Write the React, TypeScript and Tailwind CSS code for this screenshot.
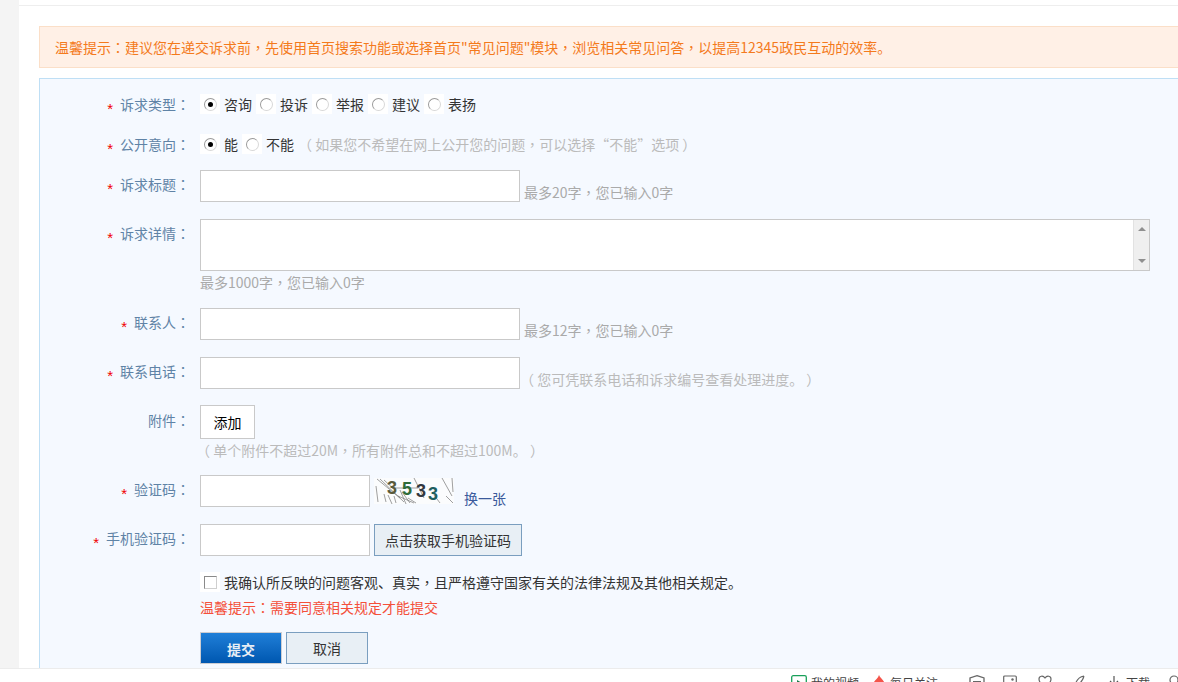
import React from "react";

const font = { fontFamily: '"Noto Sans CJK SC", "Liberation Sans", sans-serif' };

function T({ s }: { s: string }) {
  const parts = s.split(/([：，（）])/);
  return (
    <>
      {parts.map((p, i) =>
        i % 2 === 1 ? (
          <span key={i} className="font-['Noto_Sans_CJK_TC']">{p}</span>
        ) : (
          <React.Fragment key={i}>{p}</React.Fragment>
        )
      )}
    </>
  );
}

function Star() {
  return <span className="mr-[7px] h-[10px] translate-y-[2px] font-['Liberation_Sans'] text-[15px] leading-[16px] text-[#f00000]">*</span>;
}

function Label({ text, required = true, className = "" }: { text: string; required?: boolean; className?: string }) {
  return (
    <div className={`flex w-[160px] shrink-0 items-center justify-end pr-[10px] text-[14px] leading-[20px] text-[#5f83a6] ${className}`}>
      {required && <Star />}
      <span><T s={text + "："} /></span>
    </div>
  );
}

function Radio({ checked, label }: { checked?: boolean; label: string }) {
  return (
    <div className="flex items-center">
      <span className="flex h-[20px] w-[20px] items-center justify-center bg-white">
        <span className="flex h-[13px] w-[13px] items-center justify-center rounded-full border border-[#9a9a9a] border-b-[#d8d8d8] border-r-[#d8d8d8] bg-white">
          {checked && <span className="h-[5px] w-[5px] rounded-full bg-black" />}
        </span>
      </span>
      <span className="ml-[4px] mr-[4px] text-[14px] leading-[20px] text-[#333333]">{label}</span>
    </div>
  );
}

function Input({ w }: { w: string }) {
  return <div className={`h-[32px] shrink-0 border border-[#c9c9c9] bg-white ${w}`} />;
}

function Captcha() {
  return (
    <svg width="80" height="26" viewBox="0 0 80 26" className="block bg-[#fbfcfd]">
      <g stroke="#777" strokeWidth="0.7" fill="none">
        <path d="M3 1 L26 20 M6 1 L30 24 M2 8 L4 24 M10 2 L22 13 M14 17 L18 26 M26 12 L32 26 M28 14 L36 25 M24 18 L40 25 M40 0 L50 20 M68 0 L78 18 M78 0 L79 14 M72 18 L79 25 M60 17 L66 25 M10 16 L12 24 M20 18 L22 25 M18 10 L44 10 M34 20 L42 25" />
      </g>
      <text x="13" y="16" fontFamily="Liberation Sans" fontWeight="700" fontSize="18" fill="#5a5a3a">3</text>
      <text x="28" y="17" fontFamily="Liberation Sans" fontWeight="700" fontSize="18" fill="#2f6b3a">5</text>
      <text x="42" y="19" fontFamily="Liberation Sans" fontWeight="700" fontSize="18" fill="#33383f">3</text>
      <text x="54" y="22" fontFamily="Liberation Sans" fontWeight="700" fontSize="18" fill="#1f5f5f">3</text>
    </svg>
  );
}

function Footer() {
  return (
    <div className="h-[14px] w-full shrink-0 overflow-hidden border-t border-[#ececec] bg-white text-[12px] leading-[20px] text-[#444444]">
      <div className="flex h-[20px] items-start pl-[791px] pt-[6px]">
        <svg width="16" height="16" viewBox="0 0 16 16" className="shrink-0"><rect x="0.7" y="0.7" width="14.6" height="14.6" rx="1.5" fill="none" stroke="#1aa05a" strokeWidth="1.3" /><path d="M6 5 L11 8 L6 11 Z" fill="#1a7a4a" /></svg>
        <span className="ml-[4px] mt-[-2px] w-[62px] shrink-0">我的视频</span>
        <svg width="12" height="14" viewBox="0 0 12 14" className="shrink-0"><path d="M6 0 C7 3 12 6 12 10 C12 13 9 14 6 14 C3 14 0 13 0 10 C0 6 5 4 6 0Z" fill="#f4544a" /></svg>
        <span className="ml-[5px] mt-[-2px] w-[79px] shrink-0">每日关注</span>
        <svg width="16" height="14" viewBox="0 0 16 14" className="shrink-0"><path d="M8 0.7 L15 3 V10 L8 14 L1 10 V3 Z" fill="none" stroke="#666" strokeWidth="1.3" /><path d="M4 6 H12 V8 H4Z" fill="#666" /></svg>
        <svg width="14" height="14" viewBox="0 0 14 14" className="ml-[18px] shrink-0"><rect x="0.7" y="1" width="12.6" height="13" rx="1" fill="none" stroke="#666" strokeWidth="1.2" /><circle cx="9.5" cy="4.5" r="1.2" fill="#666" /></svg>
        <svg width="14" height="14" viewBox="0 0 14 14" className="ml-[21px] shrink-0"><path d="M7 3 C5 0 1 1 1 4 C1 8 5 11 7 13 C9 11 13 8 13 4 C13 1 9 0 7 3Z" fill="none" stroke="#666" strokeWidth="1.2" /></svg>
        <svg width="12" height="14" viewBox="0 0 12 14" className="ml-[21px] shrink-0"><path d="M11 1 C6 2 3 5 2 11 M11 1 C10 5 8 8 4 10" fill="none" stroke="#666" strokeWidth="1.2" /></svg>
        <svg width="10" height="14" viewBox="0 0 10 14" className="ml-[24px] mt-[1px] shrink-0"><path d="M5 0 V9 M1 5 L5 9 L9 5" fill="none" stroke="#555" strokeWidth="1.2" /></svg>
        <span className="ml-[7px] mt-[-2px] w-[42px] shrink-0">下载</span>
        <svg width="10" height="14" viewBox="0 0 10 14" className="shrink-0"><circle cx="6" cy="5" r="4" fill="none" stroke="#666" strokeWidth="1.2" /></svg>
      </div>
    </div>
  );
}

export default function App() {
  return (
    <div className="flex h-[682px] w-[1178px] flex-col overflow-hidden bg-white" style={font}>
      <div className="flex min-h-0 flex-1 overflow-hidden">
        <div className="w-[19px] shrink-0 bg-[#f4f4f4]" />
        <div className="min-w-0 flex-1 overflow-hidden">
          <div className="h-[6px] border-b border-[#eeeeee]" />
          <div className="pl-[20px] pt-[20px]">
            <div className="flex h-[42px] w-[1200px] items-center border border-[#fbdfc8] bg-[#fff0e6] pl-[15px] text-[14px] text-[#f47a1c]">
              <span><T s={'温馨提示：建议您在递交诉求前，先使用首页搜索功能或选择首页"常见问题"模块，浏览相关常见问答，以提高12345政民互动的效率。'} /></span>
            </div>
            <div className="mt-[10px] h-[700px] w-[1200px] border border-[#bfdff5] bg-[#f5f9ff] pt-[15px]">
              <div className="flex h-[20px] items-center">
                <Label text="诉求类型" />
                <div className="flex">
                  <Radio checked label="咨询" />
                  <Radio label="投诉" />
                  <Radio label="举报" />
                  <Radio label="建议" />
                  <Radio label="表扬" />
                </div>
              </div>

              <div className="mt-[20px] flex h-[20px] items-center">
                <Label text="公开意向" />
                <Radio checked label="能" />
                <Radio label="不能" />
                <span className="text-[14px] leading-[20px] text-[#bbbbbb]"><T s="（ 如果您不希望在网上公开您的问题，可以选择“不能”选项 ）" /></span>
              </div>

              <div className="mt-[16px] flex h-[32px]">
                <Label text="诉求标题" className="h-[28px]" />
                <Input w="w-[320px]" />
                <span className="ml-[4px] mt-[12px] text-[14px] leading-[20px] text-[#aaaaaa]"><T s="最多20字，您已输入0字" /></span>
              </div>

              <div className="mt-[17px] flex h-[52px]">
                <Label text="诉求详情" className="h-[28px]" />
                <div className="flex h-[52px] w-[950px] justify-end border border-[#c9c9c9] bg-white">
                  <div className="flex w-[16px] flex-col items-center justify-between border-l border-[#e2e2e2] bg-[#efefef] py-[7px]">
                    <span className="h-0 w-0 border-x-[4px] border-b-[4px] border-x-transparent border-b-[#8f8f8f]" />
                    <span className="h-0 w-0 border-x-[4px] border-t-[4px] border-x-transparent border-t-[#8f8f8f]" />
                  </div>
                </div>
              </div>
              <div className="ml-[160px] mt-[1px] text-[14px] leading-[20px] text-[#aaaaaa]"><T s="最多1000字，您已输入0字" /></div>

              <div className="mt-[16px] flex h-[32px]">
                <Label text="联系人" className="h-[28px]" />
                <Input w="w-[320px]" />
                <span className="ml-[4px] mt-[12px] text-[14px] leading-[20px] text-[#aaaaaa]"><T s="最多12字，您已输入0字" /></span>
              </div>

              <div className="mt-[17px] flex h-[32px]">
                <Label text="联系电话" className="h-[28px]" />
                <Input w="w-[320px]" />
                <span className="mt-[12px] text-[14px] leading-[20px] text-[#bbbbbb]"><T s="（ 您可凭联系电话和诉求编号查看处理进度。 ）" /></span>
              </div>

              <div className="mt-[16px] flex h-[34px]">
                <Label text="附件" required={false} className="h-[30px]" />
                <button className="h-[34px] w-[55px] border border-[#c9c9c9] bg-white text-[14px] text-black">添加</button>
              </div>
              <div className="ml-[156px] mt-[1px] text-[14px] leading-[20px] text-[#bbbbbb]"><T s="（ 单个附件不超过20M，所有附件总和不超过100M。 ）" /></div>

              <div className="mt-[15px] flex h-[32px]">
                <Label text="验证码" className="h-[28px]" />
                <Input w="w-[170px]" />
                <div className="ml-[4px] mt-[3px]"><Captcha /></div>
                <span className="ml-[10px] mt-[13px] text-[14px] leading-[20px] text-[#3a5a9c]">换一张</span>
              </div>

              <div className="mt-[17px] flex h-[32px]">
                <Label text="手机验证码" className="h-[28px]" />
                <Input w="w-[170px]" />
                <button className="ml-[4px] h-[32px] w-[148px] border border-[#7a9ebf] bg-[#e8eff5] text-[14px] text-[#333333]">点击获取手机验证码</button>
              </div>

              <div className="ml-[160px] mt-[16px] flex h-[20px] items-center">
                <span className="flex h-[20px] w-[20px] items-center justify-center bg-white">
                  <span className="h-[13px] w-[13px] border border-[#8a8a8a] border-b-[#cfcfcf] border-r-[#cfcfcf] bg-white" />
                </span>
                <span className="ml-[4px] text-[14px] leading-[20px] text-[#333333]"><T s="我确认所反映的问题客观、真实，且严格遵守国家有关的法律法规及其他相关规定。" /></span>
              </div>
              <div className="ml-[160px] mt-[5px] text-[14px] leading-[20px] text-[#f4503a]"><T s="温馨提示：需要同意相关规定才能提交" /></div>

              <div className="ml-[160px] mt-[15px] flex h-[32px] gap-[4px]">
                <button className="h-[32px] w-[82px] border border-[#cccdd2] bg-gradient-to-b from-[#1f7fd8] to-[#0057b0] pt-[2px] text-[14px] font-bold text-[#e8eef5]">提交</button>
                <button className="h-[32px] w-[82px] border border-[#7a9ebf] bg-[#e8eff5] text-[14px] text-[#333333]">取消</button>
              </div>
            </div>
          </div>
        </div>
      </div>
      <Footer />
    </div>
  );
}
